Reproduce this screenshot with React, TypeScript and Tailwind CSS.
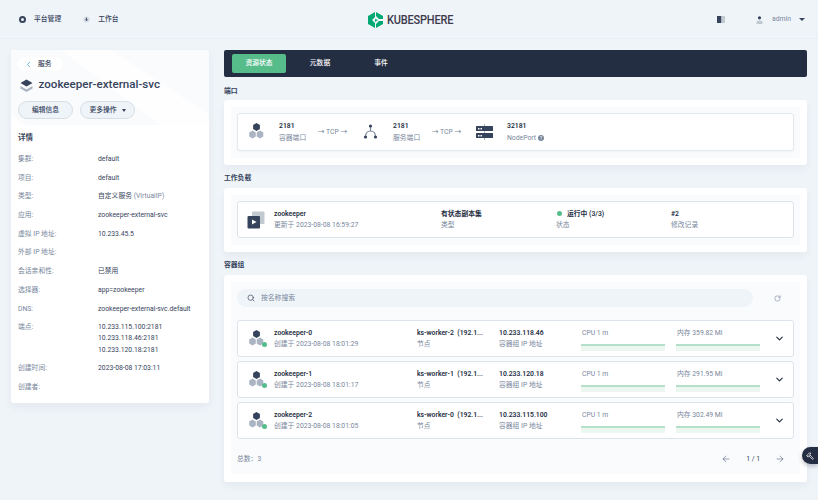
import { ChevronLeft, ChevronDown, Search, RotateCw, ArrowLeft, ArrowRight, Hammer } from "lucide-react";

const FONT = "font-['Roboto','Noto_Sans_CJK_SC',sans-serif]";

const details: { label: string; value: React.ReactNode }[] = [
  { label: "集群:", value: "default" },
  { label: "项目:", value: "default" },
  {
    label: "类型:",
    value: (
      <>
        自定义服务 <span className="text-[#79879c]">(VirtualIP)</span>
      </>
    ),
  },
  { label: "应用:", value: "zookeeper-external-svc" },
  { label: "虚拟 IP 地址:", value: "10.233.45.5" },
  { label: "外部 IP 地址:", value: "" },
  { label: "会话亲和性:", value: "已禁用" },
  { label: "选择器:", value: "app=zookeeper" },
  { label: "DNS:", value: "zookeeper-external-svc.default" },
  {
    label: "端点:",
    value: (
      <div className="flex flex-col gap-[1.3px]">
        <span>10.233.115.100:2181</span>
        <span>10.233.118.46:2181</span>
        <span>10.233.120.18:2181</span>
      </div>
    ),
  },
  { label: "创建时间:", value: "2023-08-08 17:03:11" },
  { label: "创建者:", value: "" },
];

const pods = [
  { name: "zookeeper-0", created: "2023-08-08 18:01:29", node: "ks-worker-2", ip: "10.233.118.46", mem: "359.82" },
  { name: "zookeeper-1", created: "2023-08-08 18:01:17", node: "ks-worker-1", ip: "10.233.120.18", mem: "291.95" },
  { name: "zookeeper-2", created: "2023-08-08 18:01:05", node: "ks-worker-0", ip: "10.233.115.100", mem: "302.49" },
];

function PodIcon({ status = false }: { status?: boolean }) {
  return (
    <svg width="22" height="20" viewBox="0 0 22 20">
      <path d="M9.5 1l3.4 2v4l-3.4 2-3.4-2V3z" fill="#36435c" />
      <path d="M5.5 8.5l3.3 2v4l-3.3 2-3.3-2v-4z" fill="#abb4c2" />
      <path d="M13 8.5l3.3 2v4l-3.3 2-3.3-2v-4z" fill="#abb4c2" />
      {status && <circle cx="17.5" cy="15.5" r="2.5" fill="#55bc8a" />}
    </svg>
  );
}

function TcpArrow() {
  return (
    <div className="w-[29px] flex justify-center text-[6.8px] text-[#79879c] whitespace-nowrap">→ TCP →</div>
  );
}

function Label({ value, sub }: { value: React.ReactNode; sub: React.ReactNode }) {
  return (
    <div className="flex flex-col gap-[1.3px] leading-[10px]">
      <span className="text-[6.8px] font-semibold text-[#242e42] whitespace-nowrap">{value}</span>
      <span className="text-[6.8px] text-[#79879c] whitespace-nowrap">{sub}</span>
    </div>
  );
}

function Bar({ label }: { label: string }) {
  return (
    <div className="w-[84px] mt-[2px] flex flex-col">
      <span className="text-[6.8px] leading-[10px] text-[#79879c] pl-[1px]">{label}</span>
      <div className="mt-[6px] h-[7px] bg-[#ecf7f2]">
        <div className="h-[2px] bg-[#b4e0ca]" />
      </div>
    </div>
  );
}

export default function App() {
  return (
    <div className={`${FONT} w-[818px] h-[500px] overflow-hidden bg-[#eff4f9] flex flex-col relative`}>
      {/* top bar */}
      <header className="h-[39px] shrink-0 pt-[1px] border-b border-[#e9eef4] flex items-center pl-[19px] pr-[13px] text-[6.8px]">
        <div className="flex items-center w-[349px] font-medium text-[#36435c]">
          <span className="w-[7px] h-[7px] rounded-full border-2 border-[#36435c]" />
          <span className="ml-[8px]">平台管理</span>
          <svg className="ml-[22px]" width="7" height="7" viewBox="0 0 8 8">
            <circle cx="4" cy="4" r="3.5" fill="#d5dbe4" />
            <path d="M4 2v3M2.8 4L4 5.4 5.2 4" stroke="#36435c" fill="none" strokeWidth="1" />
          </svg>
          <span className="ml-[8px]">工作台</span>
        </div>
        <div className="flex items-center">
          <svg width="15" height="16" viewBox="0 0 15 16">
            <path d="M7 0L0 4v8l7 4V11L4 8l3-3z" fill="#00a971" />
            <path d="M8 0l7 4v3H11L8 4zM8 16l7-4V9H11l-3 3z" fill="#00a971" />
            <path d="M7 7l3 1-3 2z" fill="#00a971" />
          </svg>
          <span className="ml-[4px] text-[12px] leading-none font-['Liberation_Sans_Narrow','Roboto',sans-serif] font-medium text-[#3d3a4b] tracking-[-0.2px] scale-x-[0.915] origin-left">
            KUBESPHERE
          </span>
        </div>
        <div className="ml-auto flex items-center">
          <svg width="8" height="7" viewBox="0 0 8 7">
            <rect width="4.5" height="7" fill="#36435c" />
            <rect x="4.5" width="3.5" height="7" fill="#c1c9d1" />
          </svg>
          <svg className="ml-[31px]" width="7" height="8" viewBox="0 0 7 8">
            <circle cx="3.5" cy="1.8" r="1.6" fill="#36435c" />
            <path d="M0.5 8V5.5Q3.5 3.5 6.5 5.5V8z" fill="#c1c9d1" />
          </svg>
          <span className="ml-[9px] text-[#79879c]">admin</span>
          <span className="ml-[8px] w-0 h-0 border-x-[3px] border-x-transparent border-t-[3px] border-t-[#36435c]" />
        </div>
      </header>

      <div className="flex items-start pt-[11px] pl-[11px] gap-[15px]">
        {/* left panel */}
        <aside className="w-[198px] h-[353px] shrink-0 rounded-[3px] bg-white shadow-[0_4px_8px_rgba(36,46,66,0.06)] overflow-hidden flex flex-col">
          <div className="relative h-[75px] shrink-0 bg-[#f9fbfd] overflow-hidden px-[7px] pt-[7px]">
            <svg className="absolute inset-0" width="198" height="75" viewBox="0 0 198 75">
              <path d="M50 0h50l98 65v10H150z" fill="#ffffff" opacity="0.75" />
              <path d="M0 65l14 10H0z" fill="#ffffff" opacity="0.75" />
            </svg>
            <div className="relative flex flex-col items-start">
              <div className="w-[45px] h-[14px] rounded-full bg-white flex items-center pl-[6px] text-[6.8px] text-[#36435c] font-medium">
                <ChevronLeft size={9} strokeWidth={2} className="text-[#329dce]" />
                <span className="ml-[5px] leading-none">服务</span>
              </div>
              <div className="mt-[5px] ml-[2px] flex items-center h-[18px]">
                <svg width="13" height="13" viewBox="0 0 13 13">
                  <path d="M6.5 0.5L12.5 4 6.5 7.5 0.5 4z" fill="#36435c" />
                  <path d="M0.5 7L6.5 10.5 12.5 7v2.5l-6 3.5-6-3.5z" fill="#abb4c2" />
                </svg>
                <span className="ml-[5.5px] text-[11.6px] leading-none font-medium text-[#36435c] whitespace-nowrap">
                  zookeeper-external-svc
                </span>
              </div>
              <div className="mt-[7px] flex gap-[7px] text-[6.8px] font-medium text-[#36435c]">
                <div className="w-[55px] h-[18px] rounded-full bg-[#eff4f9] border border-[#d8dee5] flex items-center justify-center">
                  编辑信息
                </div>
                <div className="w-[55px] h-[18px] rounded-full bg-[#eff4f9] border border-[#d8dee5] flex items-center justify-center gap-[5px]">
                  更多操作
                  <span className="w-0 h-0 border-x-[2.5px] border-x-transparent border-t-[3px] border-t-[#36435c]" />
                </div>
              </div>
            </div>
          </div>
          <div className="px-[7px] pt-[6px] flex flex-col">
            <h3 className="text-[7.5px] leading-[13px] font-semibold text-[#36435c]">详情</h3>
            <div className="mt-[10px] flex flex-col gap-[8.7px] text-[6.8px] leading-[10px]">
              {details.map((d) => (
                <div key={d.label} className="flex">
                  <span className="w-[80px] shrink-0 text-[#79879c]">{d.label}</span>
                  <div className="text-[#36435c] whitespace-nowrap">{d.value}</div>
                </div>
              ))}
            </div>
          </div>
        </aside>

        {/* right column */}
        <main className="w-[583px] shrink-0 flex flex-col">
          <div className="h-[27px] rounded-[2px] bg-[#242e42] flex items-center pl-[8px] text-[6.8px] text-white font-medium">
            <div className="w-[54px] h-[19px] rounded-[2px] bg-[#55bc8a] flex items-center justify-center">资源状态</div>
            <div className="w-[68px] text-center">元数据</div>
            <div className="w-[54px] text-center">事件</div>
          </div>

          <h3 className="mt-[9px] text-[6.8px] leading-[10px] font-semibold text-[#36435c]">端口</h3>
          <section className="mt-[4px] h-[65px] rounded-[3px] bg-white shadow-[0_4px_8px_rgba(36,46,66,0.05)] p-[7px]">
            <div className="h-[51px] bg-[#f9fbfd] px-[6px] py-[6px]">
              <div className="h-[38px] rounded-[3px] bg-white border border-[#e3e9ef] flex items-center pl-[9px] shadow-[0_1px_2px_rgba(36,46,66,0.04)]">
                <PodIcon />
                <div className="ml-[10px] w-[39px]">
                  <Label value="2181" sub="容器端口" />
                </div>
                <TcpArrow />
                <svg className="ml-[16px]" width="15" height="16" viewBox="0 0 15 16">
                  <path d="M7.5 3v4M7.5 7Q2.5 7 2.5 13M7.5 7Q12.5 7 12.5 13" stroke="#7a8699" strokeWidth="1.2" fill="none" />
                  <circle cx="7.5" cy="2" r="1.6" fill="#36435c" />
                  <circle cx="2.5" cy="13" r="1.6" fill="#36435c" />
                  <circle cx="12.5" cy="13" r="1.6" fill="#36435c" />
                </svg>
                <div className="ml-[15px] w-[39px]">
                  <Label value="2181" sub="服务端口" />
                </div>
                <TcpArrow />
                <svg className="ml-[14px]" width="19" height="16" viewBox="0 0 19 16">
                  <path d="M9.5 0v16" stroke="#abb4c2" strokeWidth="1" />
                  <rect x="1" y="2" width="17" height="5" rx="0.5" fill="#36435c" />
                  <rect x="1" y="9" width="17" height="5" rx="0.5" fill="#36435c" />
                  <rect x="3" y="4" width="1.5" height="1.5" fill="#fff" />
                  <rect x="5.5" y="4" width="1.5" height="1.5" fill="#fff" />
                  <rect x="3" y="11" width="1.5" height="1.5" fill="#fff" />
                  <rect x="5.5" y="11" width="1.5" height="1.5" fill="#fff" />
                </svg>
                <div className="ml-[13px]">
                  <Label
                    value="32181"
                    sub={
                      <span className="flex items-center gap-[2px]">
                        NodePort
                        <span className="w-[6px] h-[6px] rounded-full bg-[#79879c] text-white text-[5px] leading-[6px] text-center">?</span>
                      </span>
                    }
                  />
                </div>
              </div>
            </div>
          </section>

          <h3 className="mt-[8px] text-[6.8px] leading-[10px] font-semibold text-[#36435c]">工作负载</h3>
          <section className="mt-[5px] h-[64px] rounded-[3px] bg-white shadow-[0_4px_8px_rgba(36,46,66,0.05)] p-[7px]">
            <div className="h-[50px] bg-[#f9fbfd] px-[6px] py-[6px]">
              <div className="h-[37px] rounded-[3px] bg-white border border-[#dde3ea] flex items-center pl-[9px]">
                <svg width="18" height="18" viewBox="0 0 18 18">
                  <rect x="5" y="0.5" width="12.5" height="12.5" rx="1" fill="#c1c9d1" />
                  <rect x="0.5" y="5" width="12.5" height="12.5" rx="1" fill="#36435c" />
                  <path d="M5 8.5l4.5 2.5L5 13.5z" fill="#fff" />
                </svg>
                <div className="ml-[9px] w-[167px]">
                  <Label value="zookeeper" sub="更新于 2023-08-08 16:59:27" />
                </div>
                <div className="w-[115px]">
                  <Label value="有状态副本集" sub="类型" />
                </div>
                <div className="w-[115px]">
                  <Label
                    value={
                      <span className="flex items-center">
                        <span className="ml-[1px] w-[5px] h-[5px] rounded-full bg-[#55bc8a]" />
                        <span className="ml-[5px]">运行中 (3/3)</span>
                      </span>
                    }
                    sub="状态"
                  />
                </div>
                <Label value="#2" sub="修改记录" />
              </div>
            </div>
          </section>

          <h3 className="mt-[8px] text-[6.8px] leading-[10px] font-semibold text-[#36435c]">容器组</h3>
          <section className="mt-[5px] h-[207px] rounded-[3px] bg-white shadow-[0_4px_8px_rgba(36,46,66,0.05)] p-[7px]">
            <div className="h-[192px] bg-[#f9fbfd] px-[6px] pt-[7px] flex flex-col">
              <div className="flex items-center">
                <div className="w-[516px] h-[18px] rounded-full bg-[#eff4f9] flex items-center pl-[10px] text-[6.8px] text-[#79879c]">
                  <Search size={8} strokeWidth={2} className="text-[#36435c]" />
                  <span className="ml-[6px]">按名称搜索</span>
                </div>
                <RotateCw size={7} strokeWidth={2} className="ml-[21px] text-[#79879c]" />
              </div>
              <div className="mt-[13px] flex flex-col gap-[4px]">
                {pods.map((p) => (
                  <div key={p.name} className="h-[37px] rounded-[3px] bg-white border border-[#dde3ea] flex items-center pl-[9px]">
                    <PodIcon status />
                    <div className="ml-[5px] w-[143px]">
                      <Label value={p.name} sub={`创建于 ${p.created}`} />
                    </div>
                    <div className="w-[82px]">
                      <Label value={`${p.node}\u00a0\u00a0(192.1...`} sub="节点" />
                    </div>
                    <div className="w-[82px]">
                      <Label value={p.ip} sub="容器组 IP 地址" />
                    </div>
                    <Bar label="CPU 1 m" />
                    <div className="ml-[11px]">
                      <Bar label={`内存 ${p.mem} Mi`} />
                    </div>
                    <ChevronDown size={11} strokeWidth={2.5} className="ml-[14px] text-[#242e42]" />
                  </div>
                ))}
              </div>
              <div className="mt-[15px] flex items-center text-[6.8px] text-[#79879c]">
                <span>总数：3</span>
                <ArrowLeft size={10} strokeWidth={1.2} className="ml-auto text-[#36435c]" />
                <span className="mx-[15px] text-[#36435c]">1 / 1</span>
                <ArrowRight size={10} strokeWidth={1.2} className="mr-[9px] text-[#36435c]" />
              </div>
            </div>
          </section>
        </main>
      </div>

      {/* floating toolbox */}
      <div className="absolute right-0 top-[447px] w-[16px] h-[17px] rounded-l-full bg-[#242e42] flex items-center justify-center shadow-[0_2px_4px_rgba(36,46,66,0.3)]">
        <Hammer size={8} strokeWidth={2} className="text-white -scale-x-100" />
      </div>
    </div>
  );
}
